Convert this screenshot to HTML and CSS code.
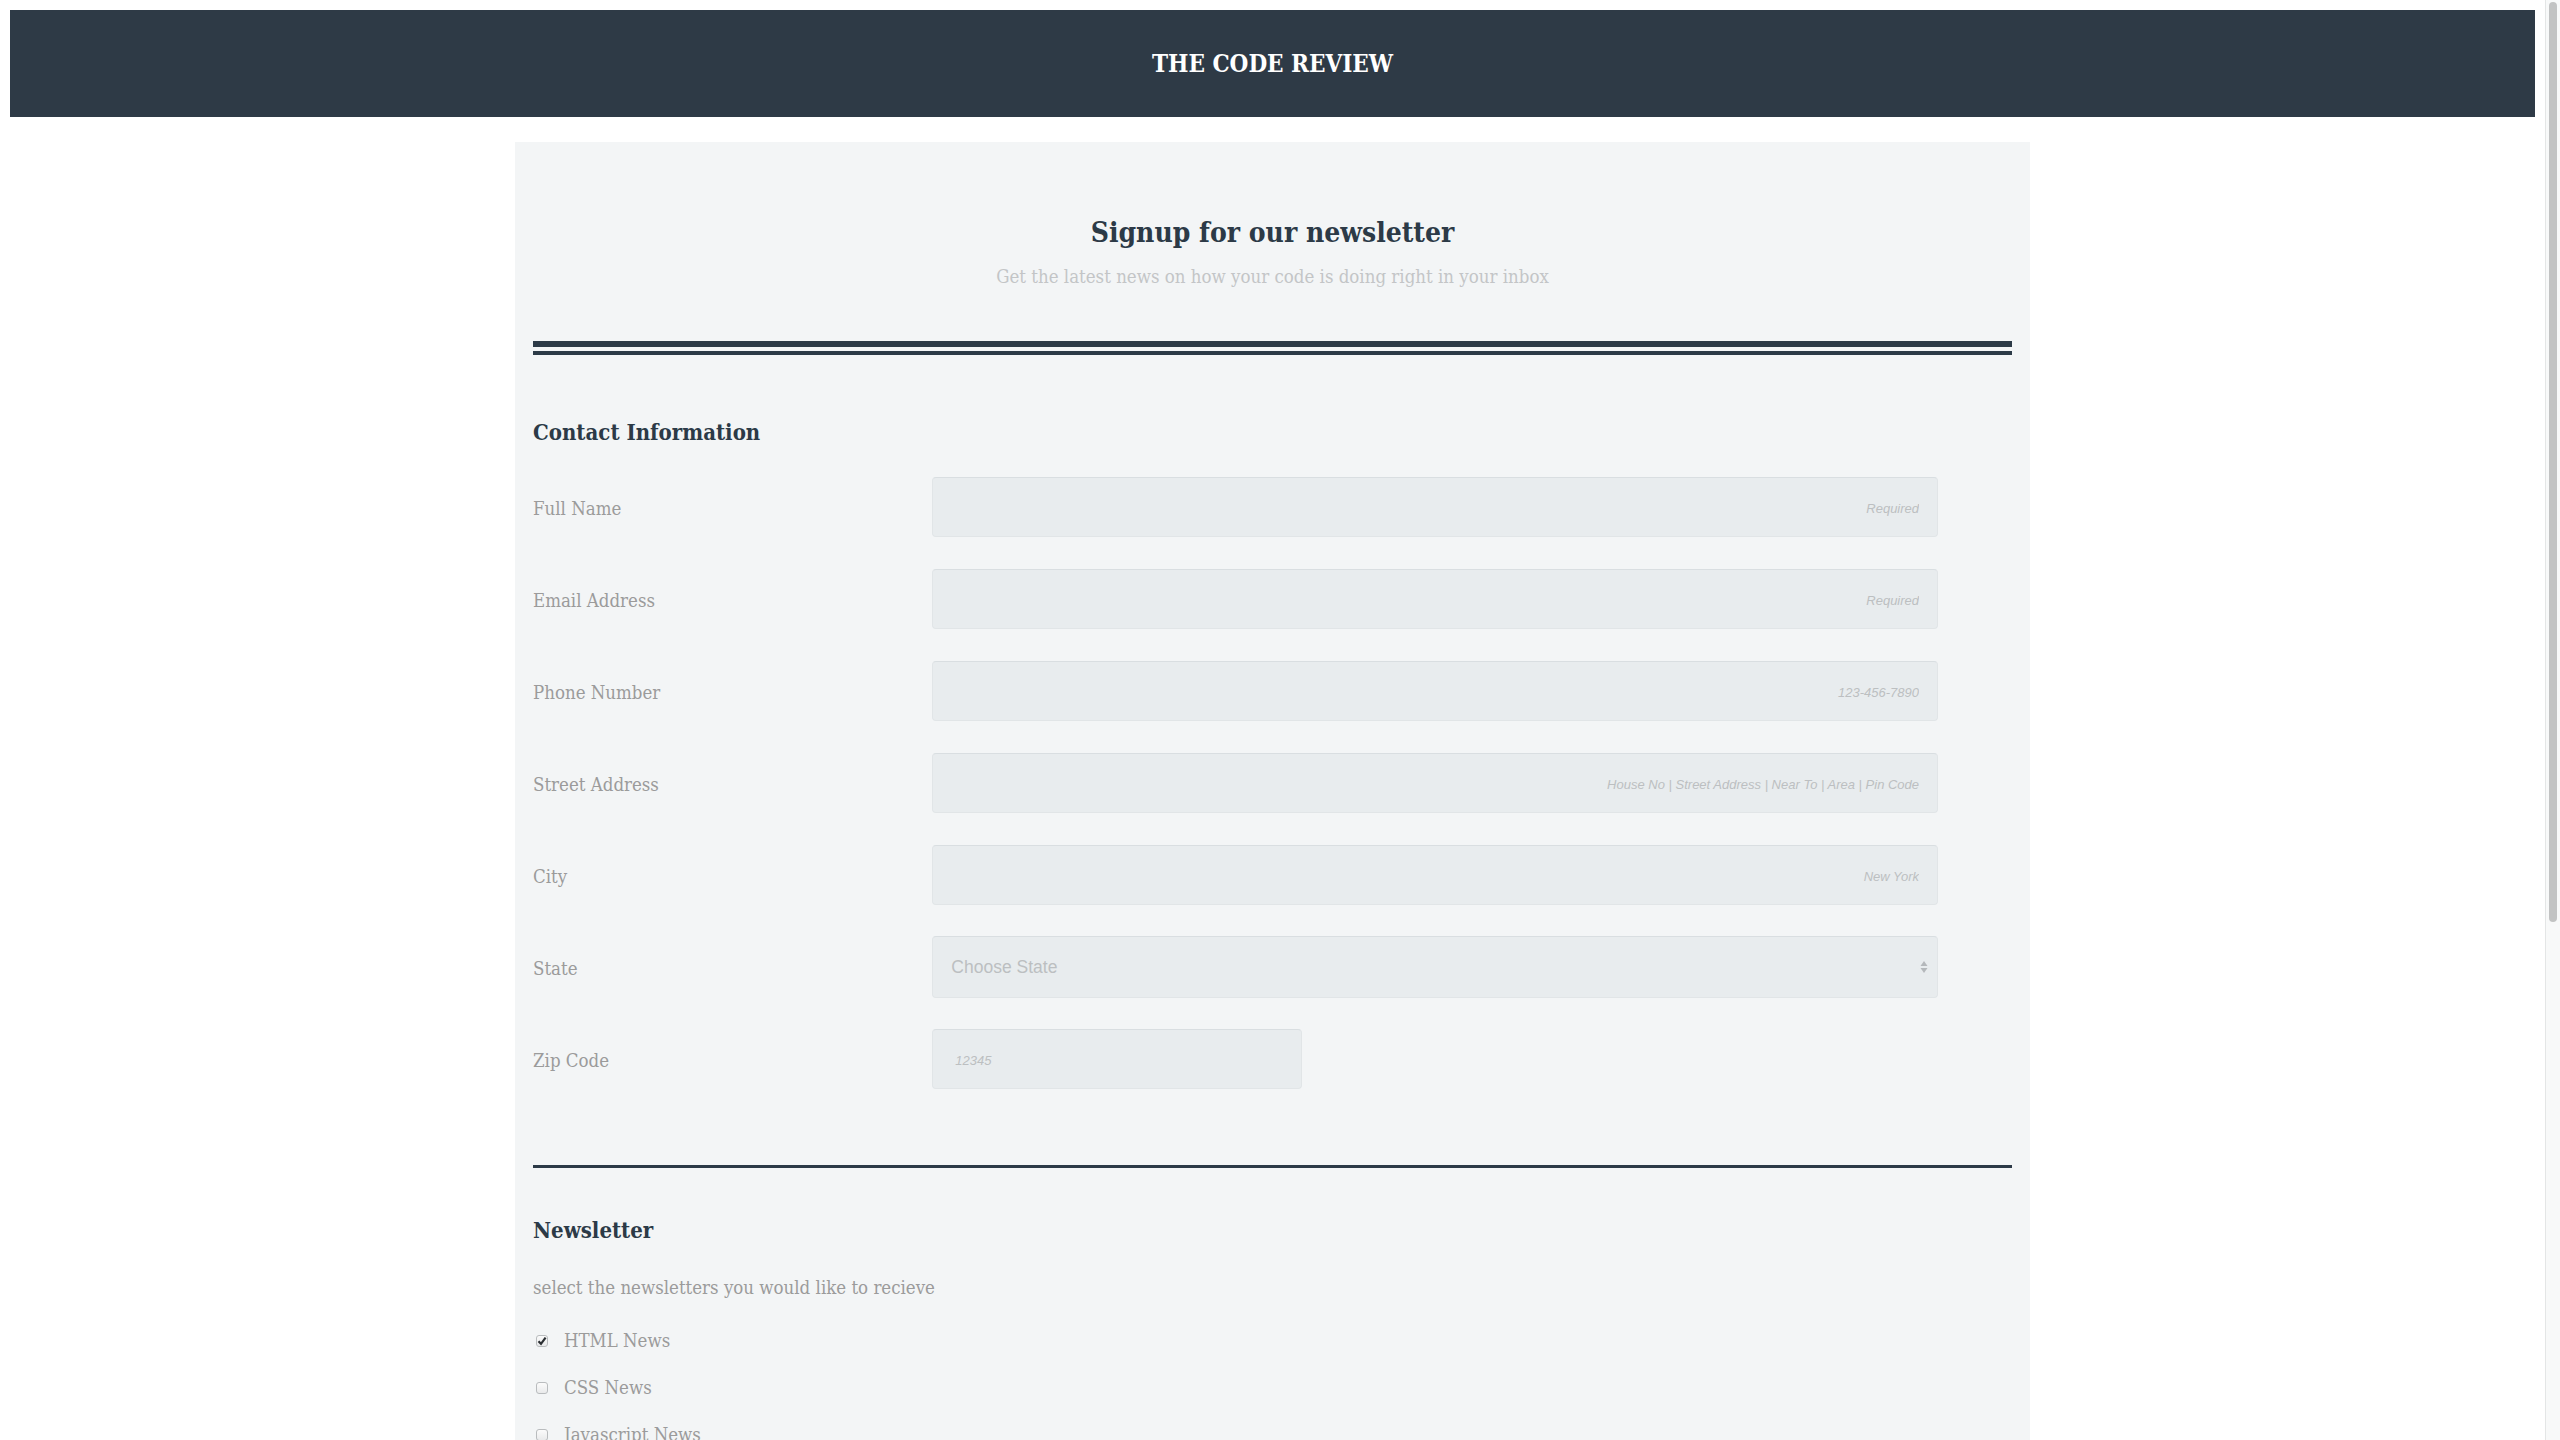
FILE: index.html
```html
<!DOCTYPE html>
<html lang="en">
<head>
<meta charset="utf-8">
<title>The Code Review – Newsletter Signup</title>
<link rel="stylesheet" href="styles.css">
</head>
<body>
<header class="site-header">
  <h1 class="site-title">THE CODE REVIEW</h1>
</header>

<main class="signup">
  <div class="intro">
    <h2 class="intro-title">Signup for our newsletter</h2>
    <p class="intro-sub">Get the latest news on how your code is doing right in your inbox</p>
  </div>
  <div class="double-rule"></div>

  <form class="form">
    <section class="section">
      <h3 class="section-title">Contact Information</h3>
      <div class="fields">
        <label class="field-label" for="name">Full Name</label>
        <input class="field-input" id="name" type="text" placeholder="Required">

        <label class="field-label" for="email">Email Address</label>
        <input class="field-input" id="email" type="email" placeholder="Required">

        <label class="field-label" for="phone">Phone Number</label>
        <input class="field-input" id="phone" type="tel" placeholder="123-456-7890">

        <label class="field-label" for="street">Street Address</label>
        <input class="field-input" id="street" type="text" placeholder="House No | Street Address | Near To | Area | Pin Code">

        <label class="field-label" for="city">City</label>
        <input class="field-input" id="city" type="text" placeholder="New York">

        <label class="field-label" for="state">State</label>
        <div class="select-wrap">
          <select class="field-input field-select" id="state">
            <option>Choose State</option>
            <option>New York</option>
            <option>California</option>
            <option>Texas</option>
          </select>
          <svg class="select-arrows" width="8" height="14" viewBox="0 0 8 14" aria-hidden="true">
            <path d="M4 1 L7.5 6 L0.5 6 Z" fill="#b4b8bb"/>
            <path d="M4 13 L7.5 8 L0.5 8 Z" fill="#b4b8bb"/>
          </svg>
        </div>

        <label class="field-label" for="zip">Zip Code</label>
        <input class="field-input field-short" id="zip" type="text" placeholder="12345">
      </div>
    </section>

    <hr class="rule">

    <section class="section">
      <h3 class="section-title section-title-news">Newsletter</h3>
      <p class="section-text">select the newsletters you would like to recieve</p>
      <div class="checks">
        <label class="check">
          <input class="check-input" type="checkbox" checked>
          <span class="check-box">
            <svg width="10" height="10" viewBox="0 0 10 10" aria-hidden="true"><path d="M1.5 5.2 L4 7.8 L8.6 1.6" fill="none" stroke="#2b2f33" stroke-width="2.2"/></svg>
          </span>
          HTML News
        </label>
        <label class="check">
          <input class="check-input" type="checkbox">
          <span class="check-box"></span>
          CSS News
        </label>
        <label class="check">
          <input class="check-input" type="checkbox">
          <span class="check-box"></span>
          Javascript News
        </label>
      </div>
    </section>

    <hr class="rule">

    <section class="section">
      <h3 class="section-title section-title-news">Additional Information</h3>
      <p class="section-text">tell us a little about what you would like to read</p>
      <textarea class="field-area" placeholder="Your message"></textarea>
      <button class="submit" type="submit">Sign Up</button>
    </section>
  </form>
</main>

<div class="scrollbar" aria-hidden="true"><div class="scrollbar-thumb"></div></div>
</body>
</html>
```
FILE: styles.css
```css
html {
  background: #ffffff;
}

body {
  margin: 10px 25px 10px 10px;
  font-family: "DejaVu Serif Condensed", "DejaVu Serif", serif;
  font-stretch: condensed;
  color: #2c3a47;
}

/* window scrollbar, as in the captured browser */
.scrollbar {
  position: fixed;
  top: 0;
  right: 0;
  width: 15px;
  height: 100vh;
  box-sizing: border-box;
  background: #f8f9f9;
  border-left: 1px solid #e4e6e6;
  padding: 2px 3px 0 3px;
}

.scrollbar-thumb {
  width: 8px;
  height: 920px;
  border-radius: 4px;
  background: #c2c3c3;
}

.site-header {
  height: 107px;
  background: #2e3a46;
  display: flex;
  align-items: center;
  justify-content: center;
}

.site-title {
  margin: 0;
  color: #ffffff;
  font-size: 24px;
  font-weight: 700;
  line-height: 30px;
}

.signup {
  box-sizing: border-box;
  width: 60%;
  margin: 25px auto 0;
  padding: 74px 18px 120px;
  background: #f3f5f6;
}

.intro {
  text-align: center;
}

.intro-title {
  margin: 0;
  font-size: 28px;
  line-height: 34px;
  font-weight: 700;
  color: #2c3a47;
}

.intro-sub {
  margin: 15px 0 0;
  font-size: 18.5px;
  line-height: 24px;
  color: #c3c5c7;
}

.double-rule {
  margin-top: 52px;
  height: 4px;
  border-top: 6px solid #2c3a47;
  border-bottom: 4px solid #2c3a47;
}

.section-title {
  margin: 63px 0 0;
  font-size: 22px;
  line-height: 28px;
  font-weight: 700;
  color: #2c3a47;
}

.section-title-news {
  margin-top: 48px;
}

.fields {
  margin-top: 31px;
  display: grid;
  grid-template-columns: 27% 68%;
  grid-auto-rows: 60px;
  row-gap: 32px;
  align-items: center;
}

.field-label {
  padding-top: 3px;
  font-size: 18.5px;
  line-height: 24px;
  color: #9b9b9b;
}

.field-input {
  box-sizing: border-box;
  width: 100%;
  height: 60px;
  margin: 0;
  padding: 0 18px;
  border: 1px solid #e1e5e7;
  border-top-color: #d9dee1;
  border-radius: 4px;
  background: #e8ecee;
  text-align: right;
  font-family: "Liberation Sans", Arial, sans-serif;
  font-size: 15px;
  color: #555;
  outline: none;
}

.field-input::placeholder {
  color: #bcbfc1;
  font-style: italic;
  font-size: 13px;
}

.field-short {
  width: 36.8%;
  text-align: left;
  padding-left: 22px;
}

.select-wrap {
  position: relative;
  height: 60px;
}

.field-select {
  height: 62px;
  margin-top: -1px;
  appearance: none;
  -webkit-appearance: none;
  text-align: left;
  padding-left: 18px;
  font-size: 17.5px;
  color: #bcbfc1;
}

.select-arrows {
  position: absolute;
  right: 10px;
  top: 23px;
}

.rule {
  margin: 76px 0 0;
  height: 0;
  border: 0;
  border-top: 3px solid #2c3a47;
}

.section-text {
  margin: 32px 0 0;
  font-size: 18.5px;
  line-height: 24px;
  color: #9b9b9b;
}

.checks {
  margin-top: 29px;
  display: flex;
  flex-direction: column;
  gap: 23px;
}

.check {
  display: flex;
  align-items: center;
  font-size: 18.5px;
  line-height: 24px;
  color: #9b9b9b;
}

.check-input {
  display: none;
}

.check-box {
  box-sizing: border-box;
  width: 12px;
  height: 12px;
  margin: 0 16px 0 3px;
  border: 1px solid #b9bcbe;
  border-radius: 3px;
  background: linear-gradient(#fbfbfb, #e9eaeb);
  display: flex;
  align-items: center;
  justify-content: center;
}

.field-area {
  display: block;
  box-sizing: border-box;
  width: 68%;
  height: 300px;
  margin-top: 29px;
  padding: 18px;
  border: 1px solid #e1e5e7;
  border-radius: 4px;
  background: #e8ecee;
  font-family: "Liberation Sans", Arial, sans-serif;
  font-size: 15px;
  resize: none;
}

.field-area::placeholder {
  color: #bcbfc1;
  font-style: italic;
  font-size: 13px;
}

.submit {
  display: block;
  margin-top: 48px;
  height: 60px;
  padding: 0 48px;
  border: 0;
  border-radius: 4px;
  background: #2e3a46;
  color: #ffffff;
  font-family: "DejaVu Serif Condensed", "DejaVu Serif", serif;
  font-stretch: condensed;
  font-size: 19px;
  font-weight: 700;
}
```
